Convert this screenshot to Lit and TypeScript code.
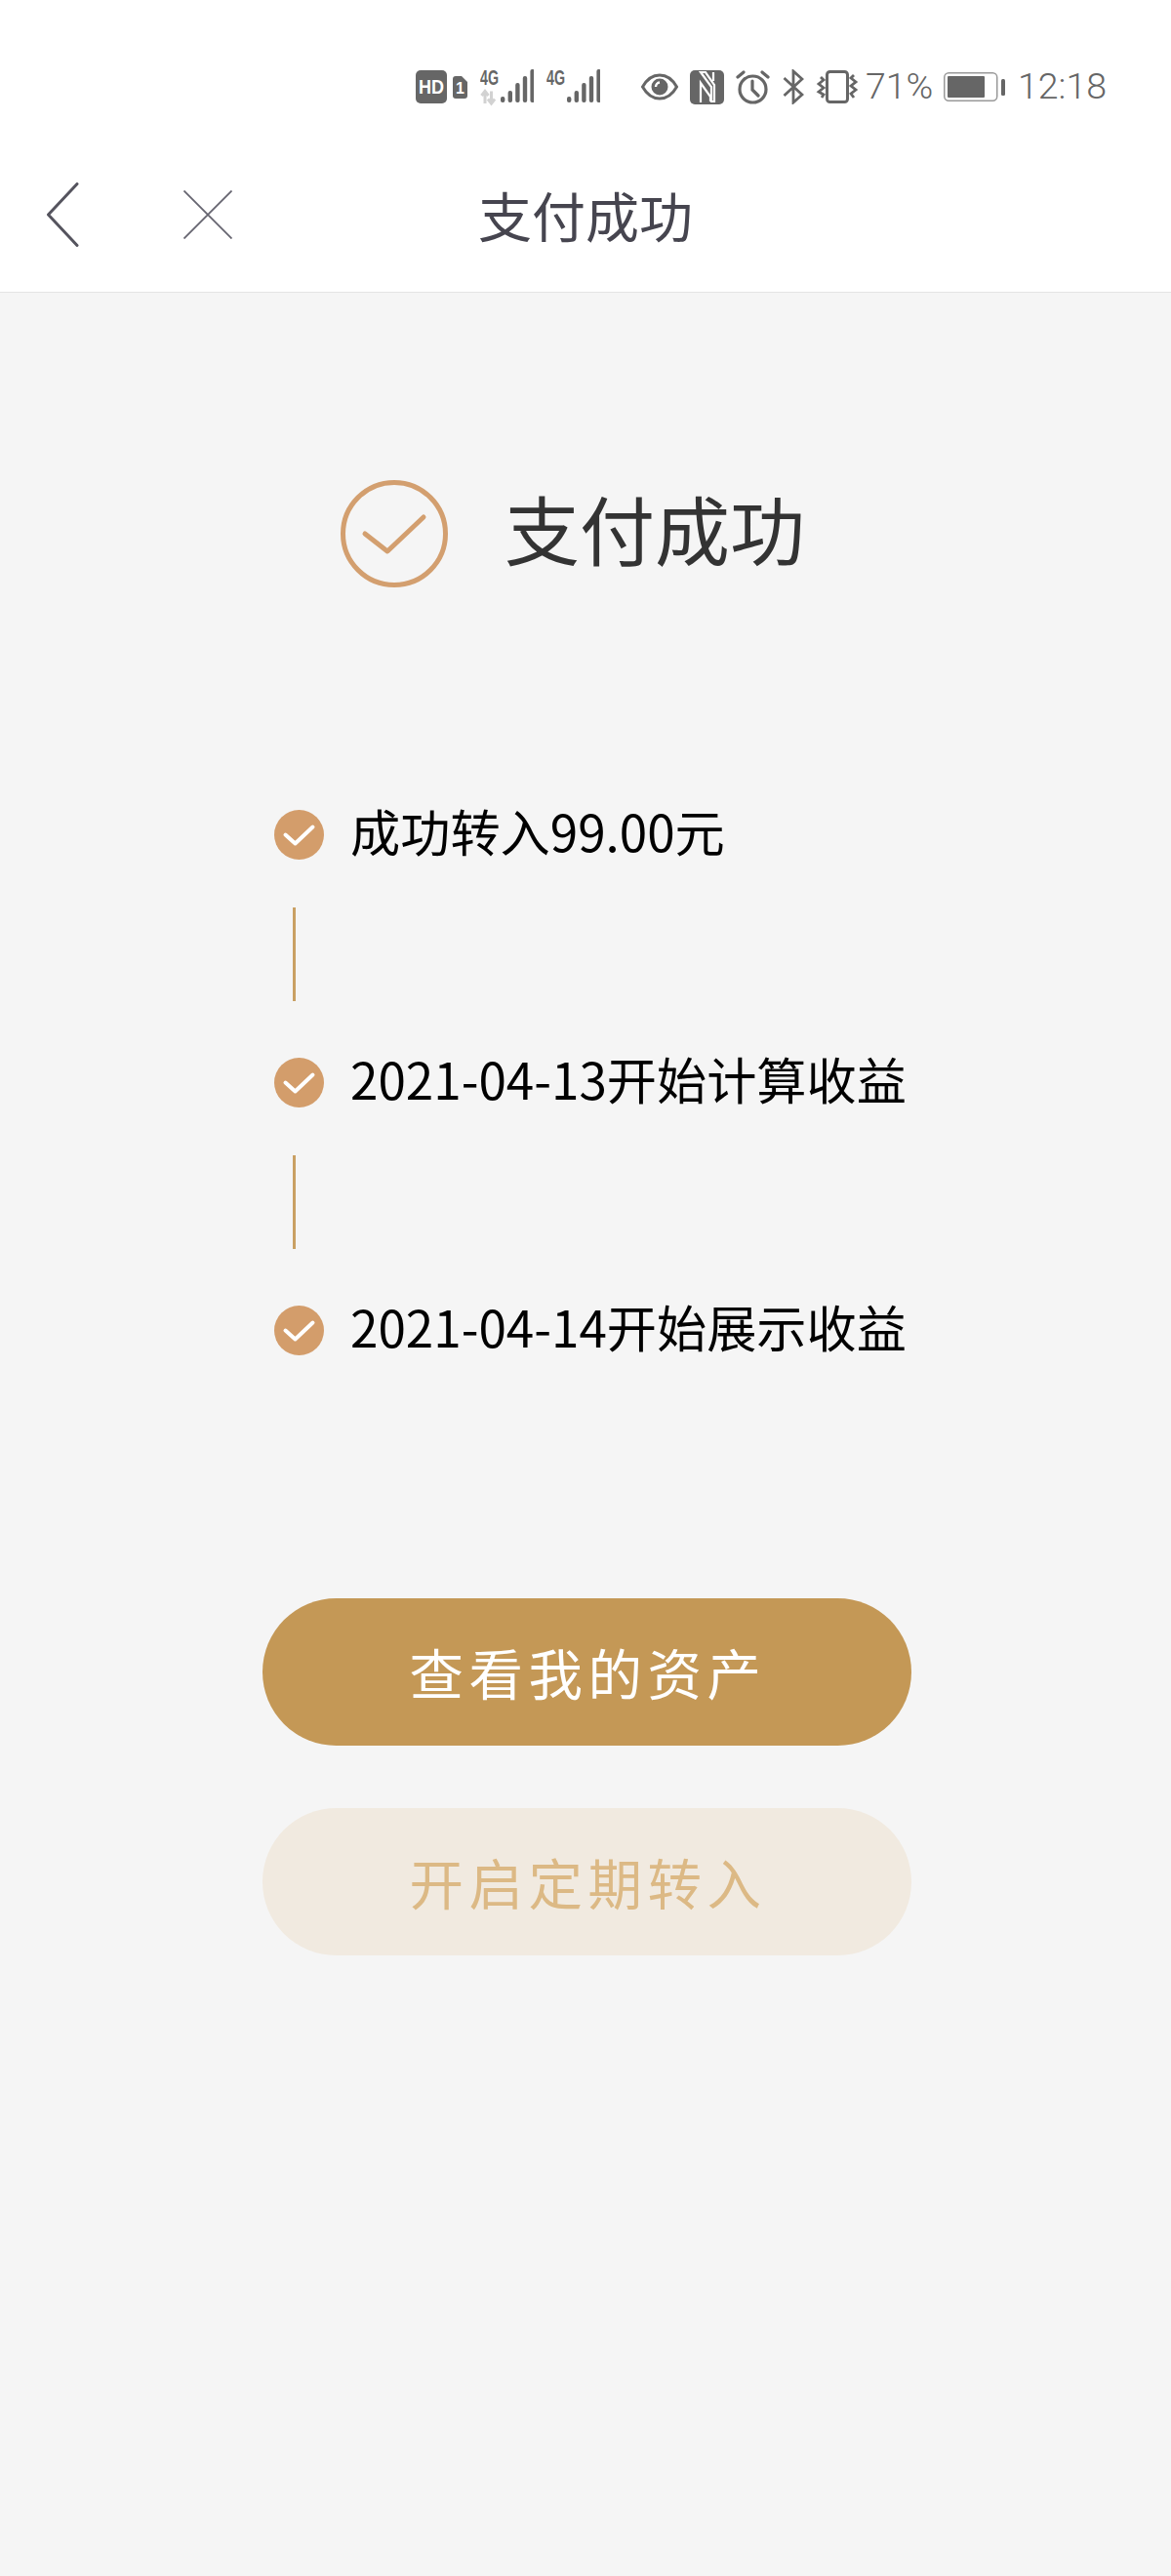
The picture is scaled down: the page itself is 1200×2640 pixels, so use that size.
import { LitElement, css, html, svg } from 'lit';
import { customElement } from 'lit/decorators.js';

const STEPS = ['成功转入99.00元', '2021-04-13开始计算收益', '2021-04-14开始展示收益'];

const signal = (bars: number[]) => bars.map((h, i) => svg`<rect x=${i * 7.6} y=${34 - h} width="4.400" height=${h} rx="2" fill="#666"/>`);

@customElement('status-bar')
export class StatusBar extends LitElement {
  static override styles = css`
    :host {
      display: flex;
      align-items: center;
      height: 150px;
      padding: 28px 0 0 426px;
      box-sizing: border-box;
      background: #fff;
      color: #666;
      font-family: Roboto, 'Liberation Sans', sans-serif;
    }

    svg {
      display: block;
      flex: none;
    }

    svg text {
      font-family: 'Liberation Sans', sans-serif;
      font-weight: 700;
    }

    .hd { margin-right: 6px; }
    .sim-1 { margin-left: 13px; }
    .sim-2 { margin-left: 13px; }
    .eye { margin-left: 42px; }
    .nfc { margin-left: 12px; }
    .alarm { margin-left: 12px; }
    .bt { margin-left: 13px; }
    .vib { margin-left: 12px; }

    .pct {
      margin-left: 7px;
      width: 68px;
      font-size: 37.500px;
      font-weight: 300;
      line-height: 1;
    }

    .batt { margin-left: 12px; }

    .time {
      margin-left: 13px;
      font-size: 37.500px;
      font-weight: 300;
      line-height: 1;
    }
  `;

  override render() {
    return html`
      <svg class="hd" width="32" height="34" viewBox="0 0 32 34">
        <rect width="32" height="34" rx="5" fill="#666"/>
        <text x="16" y="24" font-size="20" fill="#fff" text-anchor="middle" textLength="26" lengthAdjust="spacingAndGlyphs">HD</text>
      </svg>
      <svg width="15" height="23" viewBox="0 0 15 23">
        <path d="M3 0h6l6 6v14a3 3 0 0 1-3 3H3a3 3 0 0 1-3-3V3a3 3 0 0 1 3-3z" fill="#666"/>
        <text x="7.500" y="18" font-size="16" fill="#fff" text-anchor="middle">1</text>
      </svg>
      <svg class="sim-1" width="55" height="52" viewBox="0 -8 55 52">
        <text x="0" y="16" font-size="22" fill="#666" textLength="19" lengthAdjust="spacingAndGlyphs">4G</text>
        <path d="M5 35V23M1.500 27L5 22.500 8.500 27M11.500 22.500v12M8 30.500l3.500 4.500 3.500-4.500" fill="none" stroke="#d2d2d2" stroke-width="3"/>
        <g transform="translate(21 0)">${signal([6, 12, 20, 27, 34])}</g>
      </svg>
      <svg class="sim-2" width="55" height="52" viewBox="0 -8 55 52">
        <text x="0" y="16" font-size="22" fill="#666" textLength="19" lengthAdjust="spacingAndGlyphs">4G</text>
        <g transform="translate(21 0)">${signal([6, 12, 20, 27, 34])}</g>
      </svg>
      <svg class="eye" width="38" height="28" viewBox="0 0 38 28">
        <path d="M1.500 14C6 6 12 2 19 2s13 4 17.500 12C32 22 26 26 19 26S6 22 1.500 14z" fill="none" stroke="#666" stroke-width="3"/>
        <circle cx="19" cy="14" r="8.500" fill="#666"/>
        <path d="M15 14a4.500 4.500 0 0 1 4-4.500" fill="none" stroke="#fff" stroke-width="2.400"/>
      </svg>
      <svg class="nfc" width="35" height="35" viewBox="0 0 35 35">
        <rect width="35" height="35" rx="5" fill="#666"/>
        <path d="M11 2h5l9 13v17h-3V17L11 2zM24 2v9M11 33V13l10 14v5" fill="none" stroke="#fff" stroke-width="2.200"/>
      </svg>
      <svg class="alarm" width="35" height="35" viewBox="0 0 35 35">
        <circle cx="17.500" cy="19.500" r="13.500" fill="none" stroke="#666" stroke-width="3.200"/>
        <path d="M17 11v9l6 6M2 7l6-5M33 7l-6-5" fill="none" stroke="#666" stroke-width="3.200" stroke-linecap="round"/>
      </svg>
      <svg class="bt" width="22" height="36" viewBox="0 0 22 36">
        <path d="M1.500 9L20 26 11 34V2l9 8L1.500 27" fill="none" stroke="#666" stroke-width="2.800"/>
      </svg>
      <svg class="vib" width="44" height="34" viewBox="0 0 44 34">
        <rect x="11.500" y="1.500" width="21" height="31" rx="3" fill="none" stroke="#666" stroke-width="3"/>
        <path d="M5 7l3 3-5 4 5 4-5 4 5 3-2 3M39 5l-3 3 5 4-5 4 5 4-5 4 3 4" fill="none" stroke="#666" stroke-width="2.800"/>
      </svg>
      <span class="pct">71%</span>
      <svg class="batt" width="63" height="30" viewBox="0 0 63 30">
        <rect x=".75" y=".75" width="54" height="28.500" rx="4.500" fill="none" stroke="#999" stroke-width="1.500"/>
        <rect x="4" y="4" width="38" height="22" rx="1" fill="#666"/>
        <rect x="59" y="7" width="4" height="17" rx="1.500" fill="#666"/>
      </svg>
      <span class="time">12:18</span>
    `;
  }
}

@customElement('nav-bar')
export class NavBar extends LitElement {
  static override styles = css`
    :host {
      display: grid;
      grid-template-columns: 1fr auto 1fr;
      align-items: center;
      height: 150px;
      padding-bottom: 10px;
      box-sizing: border-box;
      background: #fff;
      border-bottom: 1px solid #e4e4e4;
    }

    .actions {
      display: flex;
      align-items: center;
      gap: 107px;
      padding-left: 47px;
    }

    svg {
      display: block;
    }

    .title {
      font-size: 55px;
      line-height: 1;
      color: #46454f;
    }
  `;

  override render() {
    return html`
      <div class="actions">
        <svg width="34" height="66" viewBox="0 0 34 66">
          <path d="M32 1.500L2.500 33 32 64.500" fill="none" stroke="#55545e" stroke-width="3" stroke-linejoin="round" stroke-linecap="round"/>
        </svg>
        <svg width="50" height="50" viewBox="0 0 50 50">
          <path d="M.5 .5l49 49M49.500 .5l-49 49" fill="none" stroke="#666570" stroke-width="1.800"/>
        </svg>
      </div>
      <div class="title">支付成功</div>
      <div></div>
    `;
  }
}

@customElement('app-root')
export class AppRoot extends LitElement {
  static override styles = css`
    :host {
      display: block;
      width: 1200px;
      height: 2640px;
      background: #f5f5f5;
      font-family: 'Noto Sans CJK SC', 'Noto Sans', sans-serif;
    }

    .result {
      display: flex;
      align-items: center;
      gap: 58px;
      padding: 192px 0 0 349px;
    }

    .result-icon {
      display: block;
      flex: none;
    }

    .result-text {
      padding-bottom: 12px;
      font-size: 77px;
      line-height: 98px;
      color: #333;
    }

    .steps {
      display: flex;
      flex-direction: column;
      padding: 228px 0 0 281px;
    }

    .step {
      display: flex;
      align-items: center;
      gap: 27px;
      height: 51px;
      font-size: 51.200px;
      line-height: 51px;
      color: #000;
    }

    .step span {
      padding-bottom: 9px;
    }

    .step svg {
      display: block;
      flex: none;
    }

    .connector {
      width: 3px;
      height: 96px;
      margin: 49px 0 58px 19px;
      background: #c9a063;
    }

    .buttons {
      display: flex;
      flex-direction: column;
      gap: 64px;
      padding: 249px 0 0 269px;
    }

    .btn {
      display: flex;
      align-items: center;
      justify-content: center;
      width: 665px;
      height: 151px;
      padding: 0 0 2px 2px;
      box-sizing: border-box;
      border-radius: 76px;
      font-size: 55.500px;
      letter-spacing: 5.500px;
    }

    .btn.primary {
      background: #c49856;
      color: #fff;
    }

    .btn.secondary {
      background: #f1eae0;
      color: #dcb985;
    }
  `;

  override render() {
    return html`
      <status-bar></status-bar>
      <nav-bar></nav-bar>
      <div class="result">
        <svg class="result-icon" width="110" height="110" viewBox="0 0 110 110">
          <circle cx="55" cy="55" r="52.500" fill="none" stroke="#d39f6f" stroke-width="5"/>
          <path d="M25 55l23 18 37-35" fill="none" stroke="#d39f6f" stroke-width="5" stroke-linecap="round" stroke-linejoin="round"/>
        </svg>
        <div class="result-text">支付成功</div>
      </div>
      <div class="steps">
        ${STEPS.map(
          (text, i) => html`
            ${i > 0 ? html`<div class="connector"></div>` : ''}
            <div class="step">
              <svg width="51" height="51" viewBox="0 0 51 51">
                <circle cx="25.500" cy="25.500" r="25.500" fill="#d39d6b"/>
                <path d="M11.500 25.500l10 9 18-17" fill="none" stroke="#fff" stroke-width="4" stroke-linecap="round" stroke-linejoin="round"/>
              </svg>
              <span>${text}</span>
            </div>
          `
        )}
      </div>
      <div class="buttons">
        <div class="btn primary">查看我的资产</div>
        <div class="btn secondary">开启定期转入</div>
      </div>
    `;
  }
}
